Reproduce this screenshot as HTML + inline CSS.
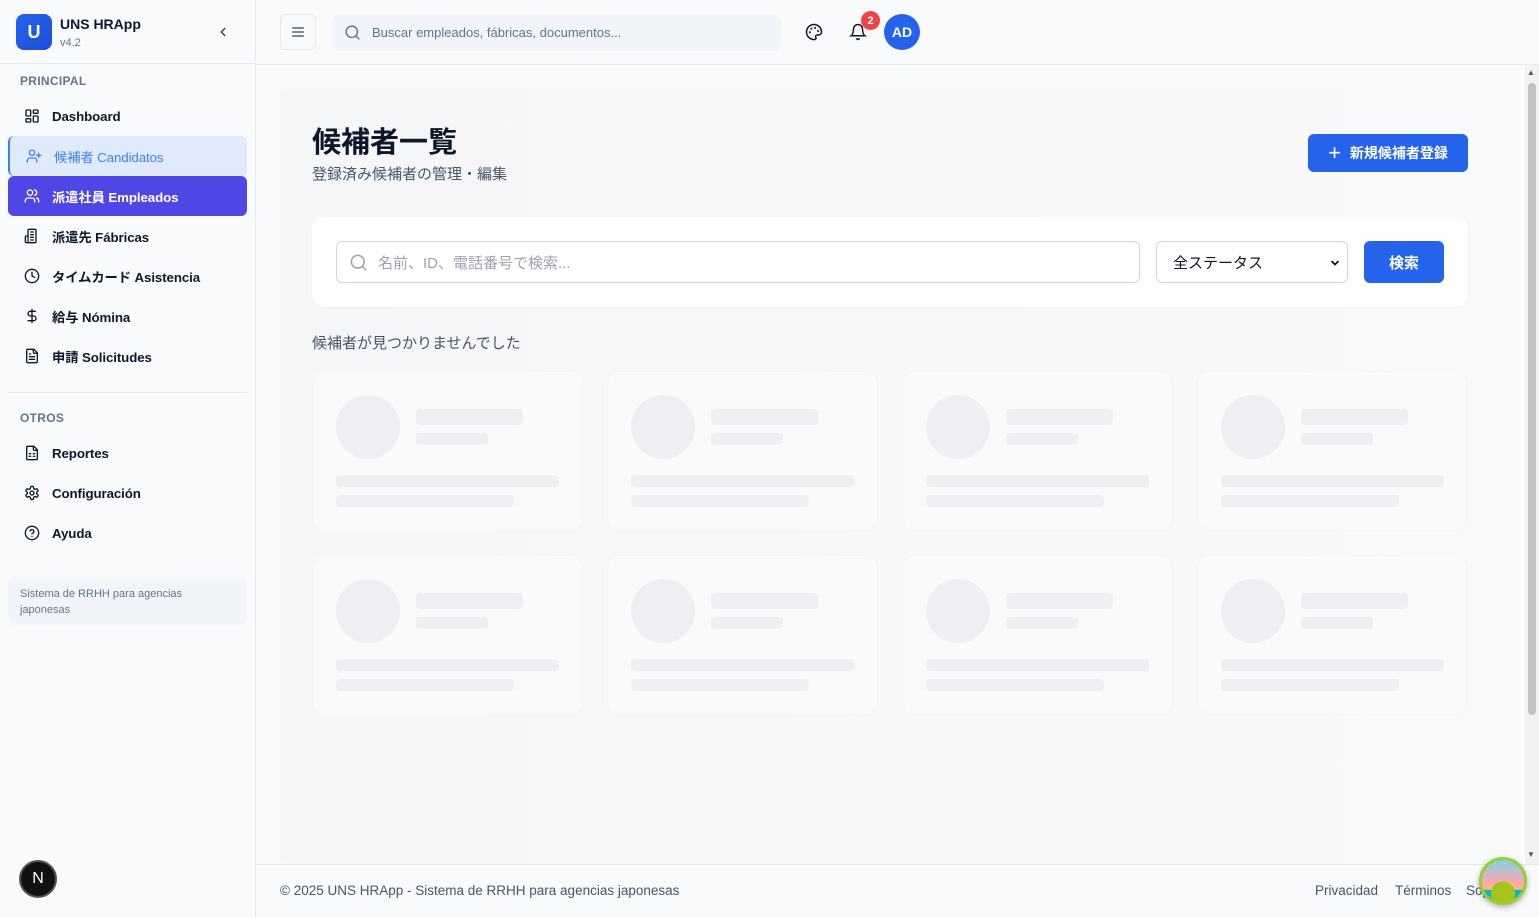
<!DOCTYPE html>
<html><head><meta charset="utf-8"><style>
*{box-sizing:border-box;margin:0;padding:0}
body{width:1539px;height:917px;overflow:hidden;background:#f8fafc;font-family:"Liberation Sans","Noto Sans CJK JP",sans-serif;color:#0f172a;position:relative}
.sb{position:absolute;left:0;top:0;width:256px;height:917px;background:#f8fafc;border-right:1px solid #e2e8f0}
.logo{position:absolute;left:16px;top:14px;width:36px;height:36px;border-radius:8px;background:linear-gradient(135deg,#2563eb,#1d4ed8);color:#fff;font-weight:bold;font-size:18px;display:flex;align-items:center;justify-content:center}
.sec{position:absolute;left:20px;font-size:12px;color:#64748b;font-weight:bold;letter-spacing:.3px}
.it{position:absolute;left:8px;width:239px;height:40px;border-radius:6px;display:flex;align-items:center;padding-left:16px;font-size:13.3px;font-weight:bold;color:#0f172a;letter-spacing:-.1px}
.it svg{width:16px;height:16px;margin-right:12px;fill:none;stroke:currentColor;stroke-width:2;stroke-linecap:round;stroke-linejoin:round}
.hdr{position:absolute;left:256px;top:0;width:1283px;height:65px;border-bottom:1px solid #e2e8f0;background:#f8fafc}
.main{position:absolute;left:280px;top:88px;width:1220px;height:776px;background:linear-gradient(90deg,#f5f6f8,#f8f9fb);border-radius:8px}
.card{position:absolute;width:271px;height:160px;background:#f9fafb;border-radius:12px;border:1px solid #f3f4f6}
.card i{position:absolute;background:#eeeff2;border-radius:4px;display:block}
</style></head><body>
<div class="sb">
 <div class="logo">U</div>
 <div style="position:absolute;left:60px;top:16px;font-size:14px;font-weight:bold">UNS HRApp</div>
 <div style="position:absolute;left:60px;top:37px;font-size:11px;color:#64748b">v4.2</div>
 <svg style="position:absolute;left:216px;top:25px" width="14" height="14" viewBox="0 0 24 24" fill="none" stroke="#334155" stroke-width="2.5" stroke-linecap="round"><path d="m15 18-6-6 6-6"/></svg>
 <div style="position:absolute;left:0;top:63px;width:255px;border-top:1px solid #e2e8f0"></div>
 <div class="sec" style="top:74px">PRINCIPAL</div>
 <div class="it" style="top:96px"><svg viewBox="0 0 24 24"><rect x="3" y="3" width="7" height="9" rx="1"/><rect x="14" y="3" width="7" height="5" rx="1"/><rect x="14" y="12" width="7" height="9" rx="1"/><rect x="3" y="16" width="7" height="5" rx="1"/></svg>Dashboard</div>
 <div class="it" style="top:136px;background:#e0eafb;color:#3b82f6;font-weight:normal;border-left:2px solid #3b82f6"><svg viewBox="0 0 24 24"><circle cx="9" cy="7" r="4"/><path d="M2 21v-2a4 4 0 0 1 4-4h6a4 4 0 0 1 4 4v2M19 8v6M16 11h6"/></svg>候補者 Candidatos</div>
 <div class="it" style="top:176px;background:#4f46e5;color:#fff"><svg viewBox="0 0 24 24"><circle cx="9" cy="7" r="4"/><path d="M2 21v-2a4 4 0 0 1 4-4h6a4 4 0 0 1 4 4v2M16 3.1a4 4 0 0 1 0 7.8M22 21v-2a4 4 0 0 0-3-3.9"/></svg>派遣社員 Empleados</div>
 <div class="it" style="top:216px"><svg viewBox="0 0 24 24"><rect x="6" y="2" width="12" height="20" rx="2"/><path d="M6 12H4a2 2 0 0 0-2 2v6a2 2 0 0 0 2 2h2M10 6h4M10 10h4M10 14h4M10 18h4"/></svg>派遣先 Fábricas</div>
 <div class="it" style="top:256px"><svg viewBox="0 0 24 24"><circle cx="12" cy="12" r="10"/><path d="M12 6v6l4 2"/></svg><span>タイムカード <span style="font-weight:bold">Asistencia</span></span></div>
 <div class="it" style="top:296px"><svg viewBox="0 0 24 24"><path d="M12 2v20M17 5H9.5a3.5 3.5 0 0 0 0 7h5a3.5 3.5 0 0 1 0 7H6"/></svg>給与 Nómina</div>
 <div class="it" style="top:336px"><svg viewBox="0 0 24 24"><path d="M15 2H6a2 2 0 0 0-2 2v16a2 2 0 0 0 2 2h12a2 2 0 0 0 2-2V7z"/><path d="M14 2v4a2 2 0 0 0 2 2h4M10 9H8M16 13H8M16 17H8"/></svg>申請 Solicitudes</div>
 <div style="position:absolute;left:8px;top:392px;width:239px;border-top:1px solid #e2e8f0"></div>
 <div class="sec" style="top:411px">OTROS</div>
 <div class="it" style="top:433px"><svg viewBox="0 0 24 24"><path d="M15 2H6a2 2 0 0 0-2 2v16a2 2 0 0 0 2 2h12a2 2 0 0 0 2-2V7z"/><path d="M14 2v4a2 2 0 0 0 2 2h4M8 13h2M14 13h2M8 17h2M14 17h2"/></svg>Reportes</div>
 <div class="it" style="top:473px"><svg viewBox="0 0 24 24"><circle cx="12" cy="12" r="3"/><path d="M12.2 2h-.4a2 2 0 0 0-2 2v.2a2 2 0 0 1-1 1.7l-.4.3a2 2 0 0 1-2 0l-.2-.1a2 2 0 0 0-2.7.7l-.2.4a2 2 0 0 0 .7 2.7l.2.1a2 2 0 0 1 1 1.7v.5a2 2 0 0 1-1 1.7l-.2.1a2 2 0 0 0-.7 2.7l.2.4a2 2 0 0 0 2.7.7l.2-.1a2 2 0 0 1 2 0l.4.3a2 2 0 0 1 1 1.7v.2a2 2 0 0 0 2 2h.4a2 2 0 0 0 2-2v-.2a2 2 0 0 1 1-1.7l.4-.3a2 2 0 0 1 2 0l.2.1a2 2 0 0 0 2.7-.7l.2-.4a2 2 0 0 0-.7-2.7l-.2-.1a2 2 0 0 1-1-1.7v-.5a2 2 0 0 1 1-1.7l.2-.1a2 2 0 0 0 .7-2.7l-.2-.4a2 2 0 0 0-2.7-.7l-.2.1a2 2 0 0 1-2 0l-.4-.3a2 2 0 0 1-1-1.7V4a2 2 0 0 0-2-2z"/></svg>Configuración</div>
 <div class="it" style="top:513px"><svg viewBox="0 0 24 24"><circle cx="12" cy="12" r="10"/><path d="M9.1 9a3 3 0 0 1 5.8 1c0 2-3 3-3 3M12 17h.01"/></svg>Ayuda</div>
 <div style="position:absolute;left:8px;top:577px;width:239px;height:48px;background:#f1f5f9;border-radius:8px;padding:9px 12px;font-size:11px;line-height:16px;color:#64748b">Sistema de RRHH para agencias japonesas</div>
 <div style="position:absolute;left:19px;top:860px;width:38px;height:38px;border-radius:50%;background:#111;border:2px solid #555;color:#fff;font-size:16px;display:flex;align-items:center;justify-content:center">N</div>
</div>
<div class="hdr">
 <div style="position:absolute;left:24px;top:14px;width:36px;height:36px;border:1px solid #e2e8f0;border-radius:6px;background:#f8fafc;display:flex;align-items:center;justify-content:center"><svg width="16" height="16" viewBox="0 0 24 24" fill="none" stroke="#334155" stroke-width="2" stroke-linecap="round"><path d="M4 6h16M4 12h16M4 18h16"/></svg></div>
 <div style="position:absolute;left:76px;top:14px;width:449px;height:37px;background:#f1f5f9;border-radius:8px"><svg style="position:absolute;left:12px;top:10px" width="17" height="17" viewBox="0 0 24 24" fill="none" stroke="#64748b" stroke-width="2" stroke-linecap="round"><circle cx="11" cy="11" r="8"/><path d="m21 21-4.3-4.3"/></svg><span style="position:absolute;left:40px;top:11px;font-size:13px;color:#64748b">Buscar empleados, fábricas, documentos...</span></div>
 <svg style="position:absolute;left:549px;top:23px" width="18" height="18" viewBox="0 0 24 24" fill="none" stroke="#0f172a" stroke-width="2"><path d="M12 22a10 10 0 1 1 10-10c0 2.8-2.2 4-4 4h-2a2 2 0 0 0-1.5 3.3A2 2 0 0 1 12 22z"/><circle cx="13.5" cy="6.5" r=".5"/><circle cx="17.5" cy="10.5" r=".5"/><circle cx="8.5" cy="7.5" r=".5"/><circle cx="6.5" cy="12.5" r=".5"/></svg>
 <svg style="position:absolute;left:593px;top:23px" width="18" height="18" viewBox="0 0 24 24" fill="none" stroke="#0f172a" stroke-width="2" stroke-linecap="round"><path d="M6 8a6 6 0 0 1 12 0c0 7 3 9 3 9H3s3-2 3-9M10.3 21a1.9 1.9 0 0 0 3.4 0"/></svg>
 <div style="position:absolute;left:605px;top:11px;width:19px;height:19px;border-radius:50%;background:#ef4444;color:#fff;font-size:11px;font-weight:bold;display:flex;align-items:center;justify-content:center">2</div>
 <div style="position:absolute;left:628px;top:14px;width:36px;height:36px;border-radius:50%;background:#2563eb;color:#fff;font-size:14px;font-weight:bold;display:flex;align-items:center;justify-content:center">AD</div>
</div>
<div class="main"></div>
<div style="position:absolute;left:312px;top:119px;font-size:29px;font-weight:bold">候補者一覧</div>
<div style="position:absolute;left:312px;top:163px;font-size:15px;color:#475569">登録済み候補者の管理・編集</div>
<div style="position:absolute;left:1308px;top:134px;width:160px;height:38px;background:#2563eb;border-radius:6px;color:#fff;font-size:14px;font-weight:bold;display:flex;align-items:center;justify-content:center"><span style="font-size:22px;font-weight:normal;margin-right:9px;line-height:1">+</span>新規候補者登録</div>
<div style="position:absolute;left:312px;top:217px;width:1156px;height:90px;background:#fff;border-radius:12px;box-shadow:0 1px 2px rgba(0,0,0,.04)"></div>
<div style="position:absolute;left:336px;top:241px;width:804px;height:42px;border:1px solid #d1d5db;border-radius:6px;background:#fff"><svg style="position:absolute;left:12px;top:11px" width="19" height="19" viewBox="0 0 24 24" fill="none" stroke="#9ca3af" stroke-width="2" stroke-linecap="round"><circle cx="11" cy="11" r="8"/><path d="m21 21-4.3-4.3"/></svg><span style="position:absolute;left:41px;top:10px;font-size:15px;color:#9ca3af">名前、ID、電話番号で検索...</span></div>
<div style="position:absolute;left:1156px;top:241px;width:192px;height:42px;border:1px solid #d1d5db;border-radius:6px;background:#fff;font-size:15px;padding:10px 16px">全ステータス<svg style="position:absolute;right:6px;top:15px" width="12" height="12" viewBox="0 0 24 24" fill="none" stroke="#111" stroke-width="3.5" stroke-linecap="round"><path d="m6 9 6 6 6-6"/></svg></div>
<div style="position:absolute;left:1364px;top:241px;width:80px;height:42px;background:#2563eb;border-radius:6px;color:#fff;font-size:15px;font-weight:bold;display:flex;align-items:center;justify-content:center">検索</div>
<div style="position:absolute;left:312px;top:332px;font-size:15px;color:#475569">候補者が見つかりませんでした</div>
<div id="cards"></div>
<script>
var h='';[371,555].forEach(function(y){[312,607,902,1197].forEach(function(x){h+='<div class="card" style="left:'+x+'px;top:'+y+'px"><i style="left:23px;top:23px;width:64px;height:64px;border-radius:50%"></i><i style="left:103px;top:37px;width:107px;height:16px"></i><i style="left:103px;top:61px;width:72px;height:12px"></i><i style="left:23px;top:103px;width:223px;height:12px"></i><i style="left:23px;top:123px;width:178px;height:12px"></i></div>'})});document.getElementById('cards').innerHTML=h;
</script>
<div style="position:absolute;left:256px;top:864px;width:1283px;height:53px;border-top:1px solid #e2e8f0;background:#f8fafc"></div>
<div style="position:absolute;left:280px;top:883px;font-size:13.5px;color:#475569">© 2025 UNS HRApp - Sistema de RRHH para agencias japonesas</div>
<div style="position:absolute;left:1315px;top:883px;font-size:13.5px;color:#475569">Privacidad</div>
<div style="position:absolute;left:1395px;top:883px;font-size:13.5px;color:#475569">Términos</div>
<div style="position:absolute;left:1466px;top:883px;font-size:13.5px;color:#475569">Soporte</div>
<div style="position:absolute;left:1525px;top:65px;width:14px;height:799px;background:#f1f1f1"><div style="position:absolute;left:3px;top:18px;width:8px;height:632px;background:#c1c1c1;border-radius:4px"></div><div style="position:absolute;left:2px;top:3px;font-size:8px;color:#555">&#9650;</div><div style="position:absolute;left:2px;top:785px;font-size:8px;color:#555">&#9660;</div></div>
<div style="position:absolute;left:1479px;top:857px;width:48px;height:48px;border-radius:50%;background:radial-gradient(circle at 50% 80%,#a3c51a 0 30%,transparent 31%),linear-gradient(#7dd3e8,#f9a8b4 50%,#fdba74 70%,#06b6d4 72%);border:3px solid #9acd32;box-shadow:0 2px 6px rgba(0,0,0,.3)"></div>
</body></html>
